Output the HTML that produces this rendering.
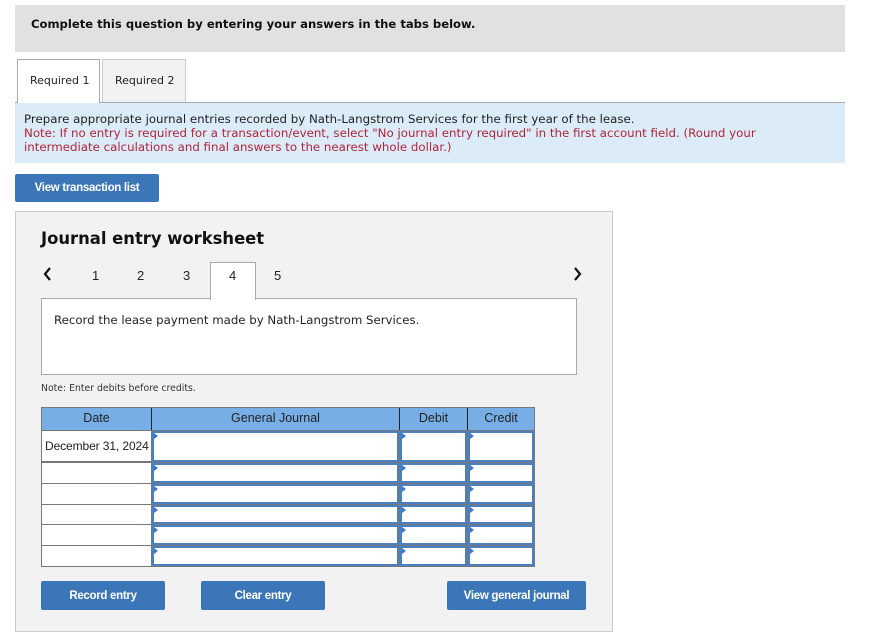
<!DOCTYPE html>
<html><head><style>
*{margin:0;padding:0;box-sizing:border-box}
body{width:875px;height:635px;background:#fff;font-family:"DejaVu Sans","Liberation Sans",sans-serif;color:#222;position:relative;overflow:hidden}
.a{position:absolute}
.btn{position:absolute;background:#3b76b9;color:#fff;font-family:"Liberation Sans",sans-serif;font-weight:bold;font-size:11.5px;display:flex;align-items:center;justify-content:center;border-radius:2px;letter-spacing:-0.3px}
.ar{font-family:"Liberation Sans",sans-serif}
.cell{position:absolute;background:#fff}
.in{position:absolute;border:2px solid #4a7fc1;background:#fff}
.in:before{content:"";position:absolute;left:0;top:0;border-left:4px solid #3b76d0;border-top:3px solid transparent;border-bottom:3px solid transparent}
</style></head><body>
<div class="a" style="left:15px;top:5px;width:830px;height:47px;background:#e1e1e1"></div>
<div class="a" style="left:31px;top:17px;font-size:11.6px;font-weight:bold;color:#111">Complete this question by entering your answers in the tabs below.</div>

<div class="a" style="left:15px;top:102px;width:830px;height:1px;background:#aaa"></div>
<div class="a" style="left:17px;top:59px;width:83px;height:45px;background:#fff;border:1px solid #aaa;border-bottom:none"></div>
<div class="a" style="left:102px;top:59px;width:84px;height:43px;background:#f2f2f2;border:1px solid #ccc;border-bottom:none"></div>
<div class="a" style="left:30px;top:74px;font-size:11px">Required 1</div>
<div class="a" style="left:115px;top:74px;font-size:11px">Required 2</div>

<div class="a" style="left:15px;top:103px;width:830px;height:60px;background:#dcebf8"></div>
<div class="a" style="left:24px;top:112px;font-size:11.8px;line-height:14px;width:800px">Prepare appropriate journal entries recorded by Nath-Langstrom Services for the first year of the lease.<br><span style="color:#b0253a">Note: If no entry is required for a transaction/event, select "No journal entry required" in the first account field. (Round your intermediate calculations and final answers to the nearest whole dollar.)</span></div>

<div class="btn" style="left:15px;top:174px;width:144px;height:28px">View transaction list</div>

<div class="a" style="left:15px;top:211px;width:598px;height:421px;background:#f2f2f2;border:1px solid #ccc"></div>
<div class="a" style="left:41px;top:229px;font-size:16.4px;font-weight:bold;color:#111">Journal entry worksheet</div>

<svg class="a" style="left:42px;top:266px" width="10" height="16"><path d="M8 2 L3 8 L8 14" stroke="#111" stroke-width="2.2" fill="none"/></svg>
<svg class="a" style="left:573px;top:266px" width="10" height="16"><path d="M2 2 L7 8 L2 14" stroke="#111" stroke-width="2.2" fill="none"/></svg>
<div class="a ar" style="left:92px;top:268px;font-size:13px">1</div>
<div class="a ar" style="left:137px;top:268px;font-size:13px">2</div>
<div class="a ar" style="left:183px;top:268px;font-size:13px">3</div>
<div class="a ar" style="left:274px;top:268px;font-size:13px">5</div>
<div class="a" style="left:41px;top:298px;width:536px;height:77px;background:#fff;border:1px solid #aaa"></div>
<div class="a" style="left:210px;top:262px;width:46px;height:38px;background:#fff;border:1px solid #aaa;border-bottom:none"></div>
<div class="a ar" style="left:229px;top:268px;font-size:13px">4</div>
<div class="a" style="left:54px;top:313px;font-size:11.75px">Record the lease payment made by Nath-Langstrom Services.</div>

<div class="a" style="left:41px;top:383px;font-size:9.3px;color:#333">Note: Enter debits before credits.</div>

<div class="a" style="left:41px;top:407px;width:494px;height:160px;background:#777"></div>
<div class="a" style="left:42px;top:408px;width:492px;height:22px;background:#78aee6"></div>
<div class="a" style="left:151px;top:408px;width:1px;height:22px;background:#222"></div>
<div class="a" style="left:399px;top:408px;width:1px;height:22px;background:#222"></div>
<div class="a" style="left:467px;top:408px;width:1px;height:22px;background:#222"></div>
<div class="a ar" style="left:42px;top:411px;width:109px;text-align:center;font-size:12.5px">Date</div>
<div class="a ar" style="left:152px;top:411px;width:247px;text-align:center;font-size:12.5px">General Journal</div>
<div class="a ar" style="left:400px;top:411px;width:67px;text-align:center;font-size:12.5px">Debit</div>
<div class="a ar" style="left:468px;top:411px;width:66px;text-align:center;font-size:12.5px">Credit</div>

<div class="cell" style="left:42px;top:431px;width:109px;height:30px"></div>
<div class="a ar" style="left:45px;top:439px;font-size:12px;letter-spacing:-0.1px">December 31, 2024</div>
<div class="cell" style="left:42px;top:463px;width:109px;height:20px"></div>
<div class="cell" style="left:42px;top:484px;width:109px;height:20px"></div>
<div class="cell" style="left:42px;top:505px;width:109px;height:19px"></div>
<div class="cell" style="left:42px;top:525px;width:109px;height:20px"></div>
<div class="cell" style="left:42px;top:546px;width:109px;height:20px"></div>

<div class="in" style="left:152px;top:431px;width:247px;height:31px"></div>
<div class="in" style="left:400px;top:431px;width:67px;height:31px"></div>
<div class="in" style="left:468px;top:431px;width:66px;height:31px"></div>
<div class="in" style="left:152px;top:463px;width:247px;height:20px"></div>
<div class="in" style="left:400px;top:463px;width:67px;height:20px"></div>
<div class="in" style="left:468px;top:463px;width:66px;height:20px"></div>
<div class="in" style="left:152px;top:484px;width:247px;height:20px"></div>
<div class="in" style="left:400px;top:484px;width:67px;height:20px"></div>
<div class="in" style="left:468px;top:484px;width:66px;height:20px"></div>
<div class="in" style="left:152px;top:505px;width:247px;height:19px"></div>
<div class="in" style="left:400px;top:505px;width:67px;height:19px"></div>
<div class="in" style="left:468px;top:505px;width:66px;height:19px"></div>
<div class="in" style="left:152px;top:525px;width:247px;height:20px"></div>
<div class="in" style="left:400px;top:525px;width:67px;height:20px"></div>
<div class="in" style="left:468px;top:525px;width:66px;height:20px"></div>
<div class="in" style="left:152px;top:546px;width:247px;height:20px"></div>
<div class="in" style="left:400px;top:546px;width:67px;height:20px"></div>
<div class="in" style="left:468px;top:546px;width:66px;height:20px"></div>

<div class="btn" style="left:41px;top:581px;width:124px;height:29px">Record entry</div>
<div class="btn" style="left:201px;top:581px;width:124px;height:29px">Clear entry</div>
<div class="btn" style="left:447px;top:581px;width:139px;height:29px">View general journal</div>
</body></html>
